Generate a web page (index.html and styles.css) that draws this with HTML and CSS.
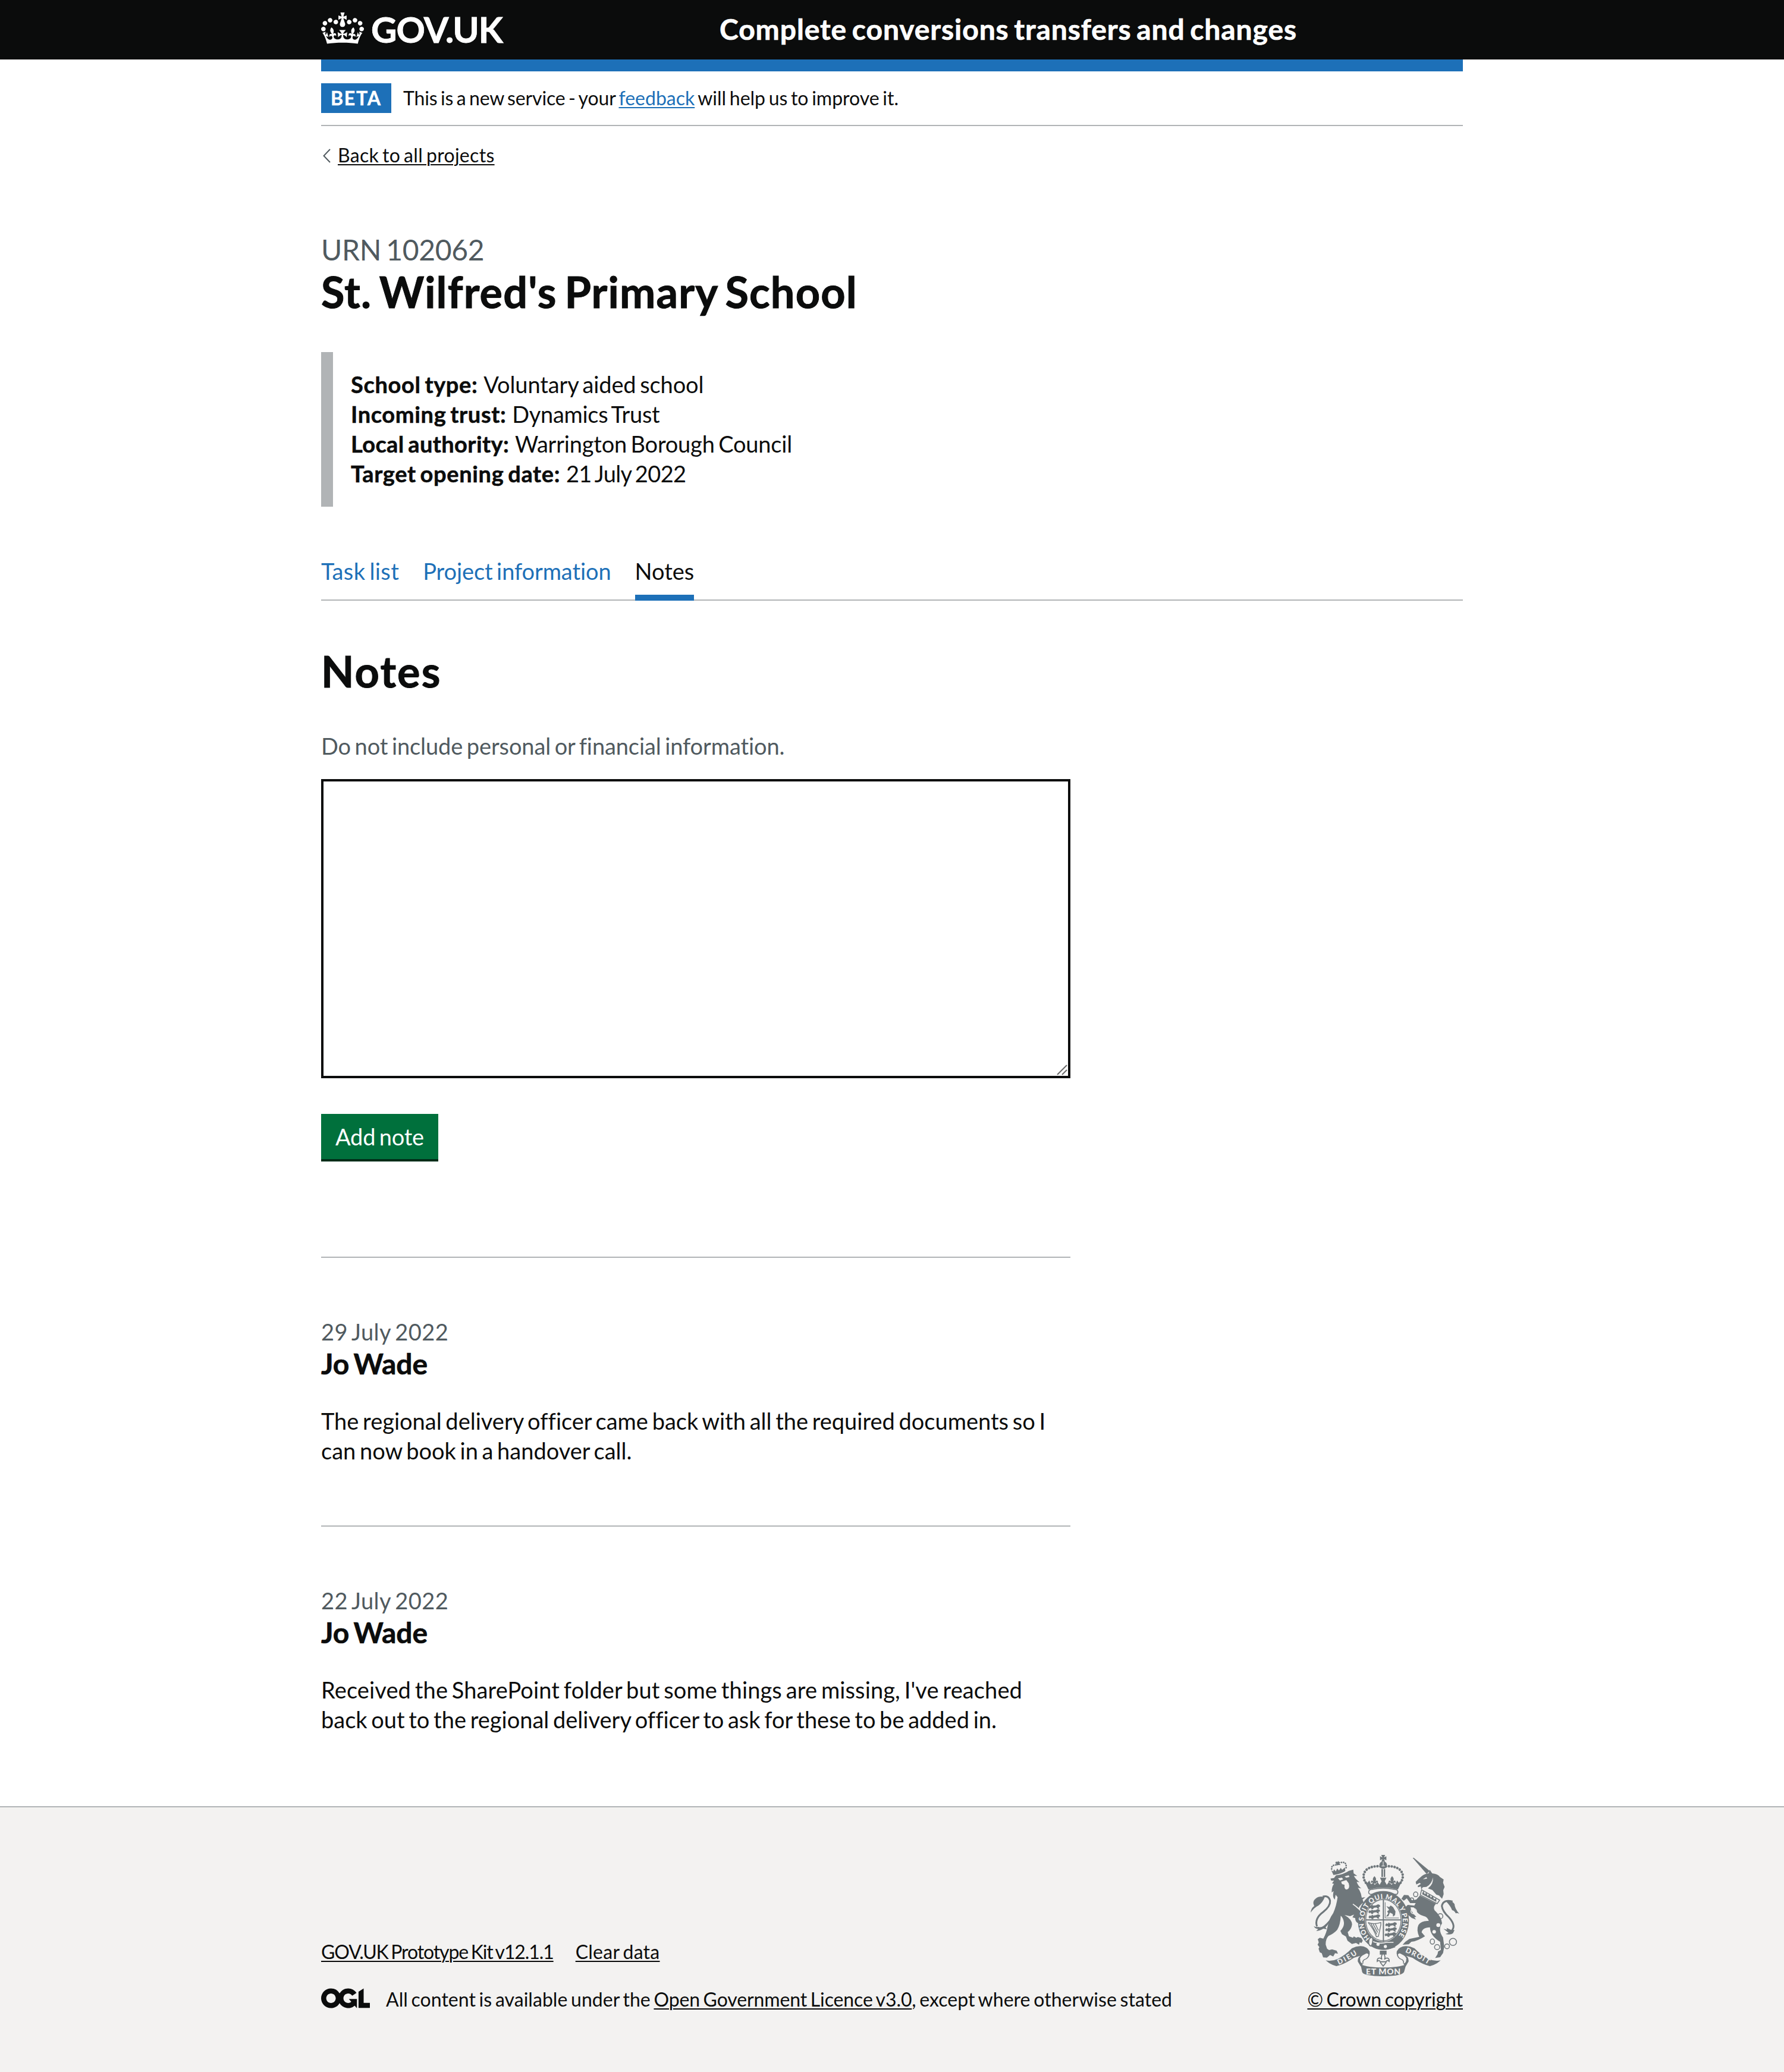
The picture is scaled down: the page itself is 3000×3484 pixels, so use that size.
FILE: index.html
```html
<!DOCTYPE html>
<html lang="en">
<head>
<meta charset="utf-8">
<title>Notes - Complete conversions transfers and changes</title>
<link rel="stylesheet" href="styles.css">
</head>
<body>
<header class="header">
  <div class="container header-row">
    <a class="logo" href="#">
      <svg class="crown" viewBox="0 0 132 97" aria-hidden="true"><path fill="currentColor" fill-rule="evenodd" d="M25 30.2c3.5 1.5 7.7-.2 9.1-3.7 1.5-3.6-.2-7.8-3.9-9.2-3.6-1.4-7.6.3-9.1 3.9-1.4 3.5.3 7.5 3.9 9zM9 39.5c3.6 1.5 7.8-.2 9.2-3.7 1.5-3.6-.2-7.8-3.9-9.1-3.6-1.5-7.6.2-9.1 3.8-1.4 3.5.3 7.5 3.8 9zM4.4 57.2c3.5 1.5 7.7-.2 9.1-3.8 1.5-3.6-.2-7.7-3.9-9.1-3.5-1.5-7.6.3-9.1 3.8-1.4 3.5.3 7.6 3.9 9.1zm38.3-21.4c3.5 1.5 7.7-.2 9.1-3.8 1.5-3.6-.2-7.7-3.9-9.1-3.6-1.5-7.6.3-9.1 3.8-1.3 3.6.4 7.7 3.9 9.1zm64.4-5.6c-3.6 1.5-7.8-.2-9.1-3.7-1.5-3.6.2-7.8 3.8-9.2 3.6-1.4 7.7.3 9.2 3.9 1.3 3.5-.4 7.5-3.9 9zm15.9 9.3c-3.6 1.5-7.7-.2-9.1-3.7-1.5-3.6.2-7.8 3.7-9.1 3.6-1.5 7.7.2 9.2 3.8 1.5 3.5-.3 7.5-3.8 9zm4.7 17.7c-3.6 1.5-7.8-.2-9.2-3.8-1.5-3.6.2-7.7 3.9-9.1 3.6-1.5 7.7.3 9.2 3.8 1.3 3.5-.4 7.6-3.9 9.1zM89.3 35.8c-3.6 1.5-7.8-.2-9.2-3.8-1.4-3.6.2-7.7 3.9-9.1 3.6-1.5 7.7.3 9.2 3.8 1.4 3.6-.3 7.7-3.9 9.1zM69.7 17.7l8.9 4.7V9.3l-8.9 2.8c-.2-.3-.5-.6-.9-.9L72.4 0H59.6l3.5 11.2c-.3.3-.6.5-.9.9l-8.8-2.8v13.1l8.8-4.7c.3.3.6.7.9.9l-5 15.4v.1c-.2.8-.4 1.6-.4 2.4 0 4.1 3.1 7.5 7 8.1h.2c.3 0 .7.1 1 .1.4 0 .7 0 1-.1h.2c4-.6 7.1-4.1 7.1-8.1 0-.8-.1-1.7-.4-2.4V34l-5.1-15.4c.4-.2.7-.6 1-.9zM66 92.8c16.9 0 32.8 1.1 47.1 3.2 4-16.9 8.9-26.7 14-33.5l-9.6-3.4c1 4.9 1.1 7.2 0 10.2-1.5-1.4-3-4.3-4.2-8.7L108.6 76c2.8-2 5-3.2 7.5-3.3-4.4 9.4-10 11.9-13.6 11.2-4.3-.8-6.3-4.6-5.6-7.9 1-4.7 5.7-5.9 8-.5 4.3-8.7-3-11.4-7.6-8.8 7.1-7.2 7.9-13.5 2.1-21.1-8 6.1-8.1 12.3-4.5 20.8-4.7-5.4-12.1-2.5-9.5 6.2 3.4-5.2 7.9-2 7.2 3.1-.6 4.3-6.4 7.8-13.5 7.2-10.3-.9-10.9-8-11.2-13.8 2.5-.5 7.1 1.8 11 7.3L80.2 60c-4.1 4.4-8 5.3-12.3 5.4 1.4-4.4 8-11.6 8-11.6H55.5s6.4 7.2 7.9 11.6c-4.2-.1-8-1-12.3-5.4l1.4 16.4c3.9-5.5 8.5-7.7 10.9-7.3-.3 5.8-.9 12.8-11.1 13.8-7.2.6-12.9-2.9-13.5-7.2-.7-5 3.8-8.3 7.1-3.1 2.7-8.7-4.6-11.6-9.4-6.2 3.7-8.5 3.6-14.7-4.6-20.8-5.8 7.6-5 13.9 2.2 21.1-4.7-2.6-11.9.1-7.7 8.8 2.3-5.5 7.1-4.2 8.1.5.7 3.3-1.3 7.1-5.7 7.9-3.5.7-9-1.8-13.5-11.2 2.5.1 4.7 1.3 7.5 3.3l-4.7-15.4c-1.2 4.4-2.7 7.2-4.3 8.7-1.1-3-.9-5.3 0-10.2l-9.5 3.4c5 6.9 9.9 16.7 14 33.5 14.8-2.1 30.8-3.2 47.7-3.2z"/></svg>
      <span class="logo-text">GOV.UK</span>
    </a>
    <a class="service-name" href="#">Complete conversions transfers and changes</a>
  </div>
</header>

<div class="container">
  <div class="phase-banner">
    <strong class="tag">BETA</strong>
    <p class="phase-text"><span class="ls-m14">This is a new service - your </span><a class="link" href="#">feedback</a><span> will help us to improve it.</span></p>
  </div>

  <a class="back" href="#">
    <svg class="chevron" viewBox="0 0 14 24" aria-hidden="true"><path d="M13 1 2.5 12 13 23" fill="none" stroke="#505a5f" stroke-width="2"/></svg>
    <span class="back-text">Back to all projects</span>
  </a>

  <main>
    <p class="caption-l">URN 102062</p>
    <h1 class="title">St. Wilfred's Primary School</h1>

    <div class="inset">
      <p><strong>School type:</strong> <span class="ls-m1">Voluntary aided school</span></p>
      <p><strong>Incoming trust:</strong> <span class="ls-m3">Dynamics Trust</span></p>
      <p><strong class="ls-p4">Local authority:</strong> <span class="ls-m2">Warrington Borough Council</span></p>
      <p><strong>Target opening date:</strong> <span class="ls-m6">21 July 2022</span></p>
    </div>

    <nav class="tabs">
      <a class="tab ls-p4" href="#">Task list</a>
      <a class="tab ls-m1" href="#">Project information</a>
      <a class="tab tab-current" href="#">Notes</a>
    </nav>

    <div class="two-thirds">
      <h2 class="section-title">Notes</h2>
      <label class="hint" for="note">Do not include personal or financial information.</label>
      <div class="field">
        <textarea class="textarea" id="note"></textarea>
        <svg class="grip" viewBox="0 0 18 18" aria-hidden="true"><path d="M1 17 17 1M9 17l8-8" stroke="#6a6a6a" stroke-width="2"/></svg>
      </div>
      <button class="button">Add note</button>

      <hr class="rule rule-first">
      <article class="note">
        <p class="caption-m">29 July 2022</p>
        <h3 class="author">Jo Wade</h3>
        <p class="body">The regional delivery officer came back with all the required documents so I<br>can now book in a handover call.</p>
      </article>
      <hr class="rule">
      <article class="note">
        <p class="caption-m">22 July 2022</p>
        <h3 class="author">Jo Wade</h3>
        <p class="body"><span class="ls-p12">Received the SharePoint folder but some things are missing, I've reached</span><br>back out to the regional delivery officer to ask for these to be added in.</p>
      </article>
    </div>
  </main>
</div>

<footer class="footer">
  <div class="container footer-row">
    <div class="footer-meta">
      <div class="footer-links"><a class="dark-link ls-m11" href="#">GOV.UK Prototype Kit v12.1.1</a><a class="dark-link ls-p25" href="#">Clear data</a></div>
      <div class="licence">
        <svg class="ogl" viewBox="0 0 483.2 195.7" aria-hidden="true"><path fill="currentColor" d="M421.5 142.8V.1l-50.7 32.3v161.1h112.4v-50.7zm-122.3-9.6A47.12 47.12 0 0 1 221 97.8c0-26 21.1-47.1 47.1-47.1 16.7 0 31.4 8.7 39.7 21.8l42.7-27.2A97.63 97.63 0 0 0 268.1 0c-36.5 0-68.3 20.1-85.1 49.7A98 98 0 0 0 97.8 0C43.9 0 0 43.9 0 97.8s43.9 97.8 97.8 97.8c36.5 0 68.3-20.1 85.1-49.7a97.76 97.76 0 0 0 149.6 25.4l19.4 22.2h3v-87.8h-80l24.3 27.5zM97.8 145c-26 0-47.1-21.1-47.1-47.1s21.1-47.1 47.1-47.1 47.1 21.1 47.1 47.1S123.8 145 97.8 145"/></svg>
        <p class="licence-text">All content is available under the <a class="dark-link ls-m1" href="#">Open Government Licence v3.0</a>, except where otherwise stated</p>
      </div>
    </div>
    <div class="copyright">
      <svg class="crest" viewBox="132 87 750 612" aria-hidden="true">
        <defs>
          <path id="garter" d="M433 508A99 114 0 1 1 562 510"/>
          <path id="droit" d="M608 577Q673 604 735 645L765 665"/>
          <path id="dieu" d="M274 641Q322 620 378 581L400 566"/>
          <g id="fleur"><path d="M0-18C-10-8-10 0-4 10-12 0-22 6-16 18-13 12-7 13-8 20H8C7 13 13 12 16 18 22 6 12 0 4 10 10 0 10-8 0-18z"/></g>
          <g id="beast"><path d="M-32 3l6-8 8 3 3-7 7 5 14-2 10-5 9 4 2 7-8 4 4 8-9-1-6-6-14 2-3 7-9-2-2-5-8 3z"/></g>
        </defs>
        <g fill="#6f777b">
          <!-- lion -->
          <path d="M232 206 250 203 260 190Q300 184 325 167L347 161 349 180 367 193 350 193Q363 215 379 224L364 223Q372 245 388 256L370 253Q386 272 390 303L408 300 394 312 399 326Q382 337 374 356L346 334Q366 358 386 371 406 390 407 415L402 434 411 446 396 442 389 452 377 441 382 428 368 430Q356 420 357 406L343 402 351 388 331 396 303 390Q340 412 341 437 338 462 319 476L325 497 345 505 350 498 362 505 370 501 388 506 395 520 388 532 380 527 376 540 361 531 340 536 318 520 310 499 290 487 282 470Q302 450 300 428 297 405 284 394 282 440 266 465 250 483 222 496 207 512 208 540L215 560 225 567 240 563 263 570 270 585 255 583 246 599 230 592 214 605 195 604 188 583 178 578 172 560 176 552 167 540 173 528 168 512 178 505 196 509Q212 480 217 450 225 410 246 380 262 345 268 300L258 288 254 312Q240 300 248 270L238 276Q238 245 250 233L240 230 250 217 236 217z"/>
          <path d="M132 378Q134 355 150 345 138 322 158 307 176 292 203 300 194 325 172 342 150 352 132 378z"/>
          <path d="M148 446Q158 452 172 450 190 460 226 416L240 390Q230 430 207 452L214 462 196 459Q180 470 160 471L170 461Q152 458 148 446z"/>
          <path d="M193 297Q224 290 230 318 233 345 195 375 150 408 164 448" fill="none" stroke="#6f777b" stroke-width="9"/>
          <path d="M247 188 236 164 246 170 250 160 259 170 266 155 275 166 284 152 291 162 305 150 307 168Q285 184 247 188z"/>
          <path d="M238 158Q236 138 260 137 266 122 284 126 304 120 311 136V154" fill="none" stroke="#6f777b" stroke-width="8" stroke-dasharray="1 10" stroke-linecap="round"/>
          <path d="M261 119 266 124 271 117 275 125 281 125 277 132 284 138 272 138 262 140 262 132 256 128z"/>
          <!-- unicorn -->
          <path d="M647 102 652 101 733 168 717 183z"/>
          <path d="M662 223Q680 204 694 193 706 182 727 180L733 162 745 180Q775 183 784 198L803 211 800 227 808 248 801 265 803 285 795 308 780 292 766 287 746 264 724 256Q754 232 748 200 745 232 716 248L698 250 690 262 688 246 674 250 672 243 688 233 682 228 665 236z"/>
          <path d="M683 292 765 333Q748 347 757 366 792 398 795 432 772 465 800 503L806 550 800 582 785 603 760 607 772 588 775 574 789 566 785 525Q735 495 734 452 694 454 692 478L709 497Q670 522 640 525L627 538 596 540 610 525 630 511 680 500Q664 465 676 440 692 417 728 420 722 399 702 395 674 388 662 365L652 352 636 351Q638 375 665 399L655 402 664 413 642 405 622 388 608 352 622 339 655 343 662 330 634 330 617 306 602 318 590 308 603 289 625 290 643 316 665 312z"/>
          <path d="M815 321Q842 312 858 335 858 356 882 384 870 378 864 382 858 368 846 366 838 345 815 321z"/>
          <path d="M848 322Q800 310 794 345 797 372 830 402 870 448 840 473" fill="none" stroke="#6f777b" stroke-width="9"/>
          <path d="M802 460 820 464 818 455 842 466 858 466 850 482Q838 492 812 486L828 480z"/>
          <g fill="none" stroke="#6f777b" stroke-width="4.500"><path d="M692 263 783 315 770 333 685 289z"/><ellipse cx="662" cy="286" rx="11" ry="12"/><ellipse cx="642" cy="312" rx="9" ry="8"/><ellipse cx="652" cy="371" rx="14" ry="13" stroke="#f3f2f1"/><circle cx="786" cy="396" r="13"/><ellipse cx="746" cy="524" rx="11" ry="13"/><circle cx="770" cy="552" r="13"/><ellipse cx="820" cy="548" rx="12" ry="12"/><circle cx="850" cy="526" r="18"/></g>
          <path d="M694 285 700 268 708 286 716 276 722 294 732 284 738 303 748 292 754 311 766 306 766 324z"/>
          <!-- centre crown -->
          <path d="M488 87h20l-6 13 12-6v20l-12-6 5 12h-18l5-12-12 6V94l12 6z"/><circle cx="498" cy="138" r="19"/><path d="M489 158h8v40h-8zM501 158h7v40h-7z"/>
          <path d="M480 143h37M498 120v22" fill="none" stroke="#f3f2f1" stroke-width="3"/>
          <path d="M484 145Q440 140 412 163 385 195 414 232" fill="none" stroke="#6f777b" stroke-width="13" stroke-linecap="round" stroke-dasharray=".1 14.500"/>
          <path d="M512 145Q556 140 584 163 611 195 582 232" fill="none" stroke="#6f777b" stroke-width="13" stroke-linecap="round" stroke-dasharray=".1 14.500"/>
          <path d="M402 216 418 228 428 216 436 235 448 228 455 238 470 225 480 238 490 220 482 202 514 202 506 220 516 238 526 225 541 238 548 228 560 235 568 216 578 228 594 216 572 262Q498 242 424 262z"/>
          <use href="#fleur" x="454" y="212"/><use href="#fleur" x="543" y="212"/>
          <path d="M425 279Q422 262 440 261 498 249 556 261 576 262 571 280 567 290 552 284 498 260 444 284 430 290 425 279z" fill="#f3f2f1" stroke="#6f777b" stroke-width="5"/>
          <!-- garter and shield -->
          <ellipse cx="499" cy="418" rx="129" ry="148"/>
          <ellipse cx="499" cy="416" rx="93" ry="108" fill="#f3f2f1"/>
        </g>
        <path d="M345 335Q372 352 392 378M432 516Q470 540 515 528L550 528" fill="none" stroke="#f3f2f1" stroke-width="5"/>
        <text class="motto" font-size="34"><textPath href="#garter" textLength="505" lengthAdjust="spacing">HON SOIT QUI MAL Y PENSE</textPath></text>
        <g fill="#6f777b">
          <path d="M496 312h6v212h-6zM410 412h178v6H410z"/>
          <ellipse cx="499" cy="416" rx="89" ry="104" fill="none" stroke="#6f777b" stroke-width="4"/>
          <use href="#beast" x="456" y="347"/><use href="#beast" x="455" y="371"/><use href="#beast" x="456" y="397"/>
          <use href="#beast" x="540" y="437"/><use href="#beast" x="540" y="462"/><use href="#beast" x="537" y="487"/>
          <path d="M508 326V405H577" fill="none" stroke="#6f777b" stroke-width="3"/>
          <path d="M514 345 528 350 536 342 548 350 560 372 558 390 548 398 546 385 532 378 524 396 512 398 524 382 518 372 528 364z"/>
          <path d="M422 428Q450 440 486 428V440L474 498 464 500Q450 460 422 428zM434 430 466 488M446 434 470 478M458 434 474 468" fill="none" stroke="#6f777b" stroke-width="4"/>
          <path d="M430 520Q460 552 545 543L560 553Q500 575 440 545z"/>
        </g>
        <g fill="#f3f2f1"><circle cx="472" cy="538" r="8"/><circle cx="509" cy="549" r="8"/><circle cx="776" cy="441" r="10"/><circle cx="755" cy="475" r="9"/><path d="M270 205 290 202 296 210 280 216zM303 196 324 190 328 198 312 202z"/><path d="M286 222 312 214 324 230Q332 256 314 262 300 262 303 238L290 234z"/><path d="M698 210 716 199 720 206z"/></g>
        <path d="M443 502Q424 505 425 525 424 545 438 547M443 502Q450 520 438 547" fill="#f3f2f1" stroke="#6f777b" stroke-width="5"/>
        <!-- scroll -->
        <g fill="#6f777b">
          <path d="M208 619Q240 625 270 611 310 590 340 558 370 542 400 549 432 560 430 585 428 610 402 618 396 625 398 634L385 650 370 625Q367 600 395 589 405 584 412 592 395 590 350 606 300 640 262 648 230 640 208 619z"/>
          <path d="M788 619Q756 625 726 611 686 590 656 558 626 542 596 549 564 560 566 585 568 610 594 618 600 625 598 634L611 650 626 625Q629 600 601 589 591 584 584 592 601 590 646 606 696 640 734 648 766 640 788 619z"/>
          <path d="M384 639Q420 655 498 655 576 655 614 639L604 675Q600 698 498 699 398 698 392 678z"/>
          <path d="M481 570h34v20h-34z"/>
        </g>
        <path d="M382 615Q378 600 405 588 418 578 424 590 420 608 400 614 388 625 396 636 380 630 382 615zM614 615Q618 600 591 588 578 578 572 590 576 608 596 614 608 625 600 636 616 630 614 615z" fill="#f3f2f1"/>
        <path d="M498 583C487 594 487 604 492 614 482 602 466 606 468 624 475 617 484 620 484 630L498 648 512 630C512 620 521 617 528 624 530 606 514 602 504 614 509 604 509 594 498 583z" fill="#f3f2f1" stroke="#6f777b" stroke-width="5"/>
        <path d="M484 626h28" stroke="#6f777b" stroke-width="6"/>
        <text class="motto" font-size="36"><textPath href="#dieu" textLength="108">DIEU</textPath></text>
        <text class="motto" font-size="36"><textPath href="#droit" textLength="132">DROIT</textPath></text>
        <text class="motto" x="411" y="689" font-size="42" textLength="174">ET MON</text>
      </svg>
      <a class="dark-link copyright-link" href="#">© Crown copyright</a>
    </div>
  </div>
</footer>
</body>
</html>
```
FILE: styles.css
```css
* { box-sizing: border-box; word-spacing: -.08em; }
body {
  margin: 0;
  background: #fff;
  color: #0b0c0c;
  font-family: Lato, "Liberation Sans", sans-serif;
  font-size: 38px;
  line-height: 50px;
  font-variant-ligatures: none;
}
p, h1, h2, h3 { margin: 0; }
h1, h2, h3, strong, .logo-text, .service-name { -webkit-text-stroke: .014em currentColor; }
.container { width: 1920px; margin: 0 auto; }

/* header */
.header { height: 100px; background: #0b0c0c; color: #fff; }
.header a { color: inherit; text-decoration: none; }
.header-row {
  display: grid;
  grid-template-columns: 670px 1fr;
  height: 120px;
  border-bottom: 20px solid #1d70b8;
}
.logo { display: flex; gap: 12px; }
.crown { width: 72px; height: 53px; margin-top: 21px; }
.logo-text { margin-top: 19px; font-size: 60px; line-height: 60px; font-weight: 700; letter-spacing: -1px; }
.service-name { margin-top: 19px; font-size: 48px; line-height: 60px; font-weight: 700; letter-spacing: .9px; }

/* phase banner */
.phase-banner {
  display: flex;
  gap: 20px;
  margin-top: 20px;
  padding: 20px 0;
  border-bottom: 2px solid #b1b4b6;
  font-size: 32px;
  line-height: 50px;
}
.tag {
  width: 118px;
  height: 50px;
  padding: 0 16px;
  background: #1d70b8;
  color: #fff;
  letter-spacing: 1.75px;
}
.phase-text { white-space: pre; }
.link { color: #1d70b8; }
.dark-link { color: #0b0c0c; }
.link, .dark-link, .back-text {
  text-decoration: underline;
  text-decoration-thickness: 2px;
  text-underline-offset: 3px;
}

.back {
  display: flex;
  width: max-content;
  gap: 12px;
  margin-top: 29px;
  padding-left: 2px;
  color: #0b0c0c;
  font-size: 32px;
  line-height: 40px;
  text-decoration: none;
}
.chevron { width: 14px; height: 24px; margin-top: 9px; }
.back-text { letter-spacing: .3px; }

/* project heading */
.caption-l { margin-top: 109px; color: #505a5f; font-size: 48px; line-height: 60px; letter-spacing: -.32px; }
.title { margin-top: 2px; font-size: 72px; line-height: 76px; letter-spacing: 1.16px; }
.inset { margin-top: 64px; padding: 29px 30px 31px; border-left: 20px solid #b1b4b6; }
.inset p { word-spacing: 0; }
.inset strong { letter-spacing: .65px; }

.tabs {
  display: flex;
  gap: 40px;
  margin-top: 83px;
  box-shadow: inset 0 -2px #b1b4b6;
}
.tab { padding-bottom: 15px; border-bottom: 10px solid transparent; color: #1d70b8; text-decoration: none; }
.tab-current { border-color: #1d70b8; color: #0b0c0c; }

/* notes */
.two-thirds { width: 1260px; }
.section-title { margin-top: 80px; font-size: 72px; line-height: 76px; letter-spacing: 2.2px; }
.hint { display: block; margin-top: 63px; color: #505a5f; letter-spacing: -.1px; }
.field { position: relative; margin-top: 31px; }
.textarea {
  display: block;
  width: 100%;
  height: 503px;
  padding: 10px;
  border: 4px solid #0b0c0c;
  border-radius: 0;
  background: #fff;
  font: inherit;
  resize: none;
}
.grip { position: absolute; right: 5px; bottom: 5px; width: 18px; height: 18px; }
.button {
  display: block;
  width: 197px;
  height: 76px;
  margin-top: 60px;
  padding: 1px 0 0;
  border: 0;
  background: #00703c;
  box-shadow: 0 4px #002d18;
  color: #fff;
  font: inherit;
  line-height: 75px;
  letter-spacing: -.2px;
}
.rule { height: 2px; margin: 101px 0 0; border: 0; background: #b1b4b6; }
.rule-first { margin-top: 164px; }
.note { padding-top: 100px; }
.caption-m { color: #505a5f; line-height: 48px; letter-spacing: .45px; }
.author { font-size: 48px; line-height: 60px; letter-spacing: -.1px; }
.body { margin-top: 41px; white-space: nowrap; }

/* footer */
.footer {
  height: 447px;
  margin-top: 121px;
  padding-top: 80px;
  border-top: 2px solid #b1b4b6;
  background: #f3f2f1;
  font-size: 32px;
}
.footer-row { display: flex; justify-content: space-between; align-items: flex-end; }
.footer-meta { display: grid; gap: 30px; }
.footer-links { display: flex; gap: 37px; }
.licence { display: flex; gap: 27px; }
.licence-text { letter-spacing: .04px; }
.ogl { width: 82px; height: 34px; margin-top: 6px; }
.copyright { display: flex; flex-direction: column; align-items: center; gap: 14px; }
.crest { width: 250px; height: 204px; }
.copyright-link { letter-spacing: -.1px; }
.motto { fill: #f3f2f1; font-family: Lato, sans-serif; font-weight: 900; word-spacing: 0; }

/* letter-spacing steps */
.ls-m1 { letter-spacing: -.1px; }
.ls-m14 { letter-spacing: -.14px; }
.ls-m2 { letter-spacing: -.2px; }
.ls-m3 { letter-spacing: -.3px; }
.ls-m6 { letter-spacing: -.6px; }
.ls-m11 { letter-spacing: -1.1px; }
.ls-p12 { letter-spacing: .12px; }
.ls-p25 { letter-spacing: .25px; }
.ls-p4, .inset .ls-p4 { letter-spacing: .4px; }
```
